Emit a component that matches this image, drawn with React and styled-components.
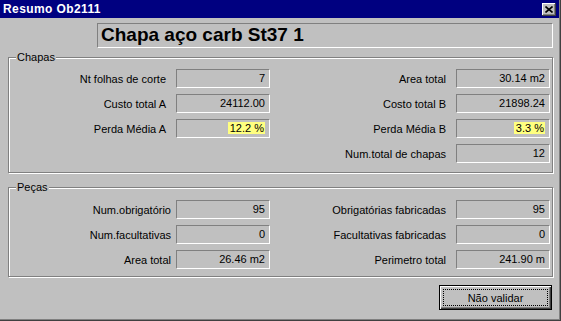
import React from "react";
import styled, { createGlobalStyle } from "styled-components";

const Global = createGlobalStyle`
  html, body { margin: 0; padding: 0; background: #c0c0c0; }
  body { font-family: "Liberation Sans", Arial, sans-serif; }
  * { box-sizing: border-box; }
`;

const Frame = styled.div`
  width: 561px;
  height: 321px;
  background: #c0c0c0;
  padding: 0 2px 2px 0;
  box-shadow: inset -1px -1px 0 #404040, inset -2px -2px 0 #808080;
  display: flex;
  flex-direction: column;
  overflow: hidden;
`;

const TitleBar = styled.div`
  height: 18px;
  background: #000080;
  display: flex;
  align-items: center;
  justify-content: space-between;
  padding: 0 2px 0 3px;
`;

const Title = styled.span`
  color: #ffffff;
  font-weight: bold;
  font-size: 12px;
  letter-spacing: 0.4px;
`;

const CloseButton = styled.div`
  width: 14px;
  height: 13px;
  background: #c0c0c0;
  box-shadow: inset -1px -1px 0 #404040, inset 1px 1px 0 #ffffff, inset -2px -2px 0 #808080;
  display: flex;
  align-items: center;
  justify-content: center;
  margin-right: 1px;
`;

const Content = styled.div`
  flex: 1;
  padding: 5px 6px 0 8px;
  display: flex;
  flex-direction: column;
`;

const Heading = styled.div`
  margin-left: 89px;
  height: 25px;
  border-top: 1px solid #808080;
  border-left: 1px solid #808080;
  border-bottom: 1px solid #ffffff;
  border-right: 1px solid #ffffff;
  font-weight: bold;
  font-size: 19px;
  line-height: 22px;
  padding-left: 3px;
  color: #000;
`;

const Group = styled.div`
  position: relative;
  margin-top: ${(p) => p.$top}px;
  border: 1px solid #808080;
  box-shadow: 1px 1px 0 #ffffff, inset 1px 1px 0 #ffffff;
  padding: ${(p) => p.$pad};
  display: grid;
  grid-template-columns: 166px 94px 186px 94px;
  grid-auto-rows: 19px;
  row-gap: 6px;
  align-items: center;
`;

const Legend = styled.span`
  position: absolute;
  left: 7px;
  top: -7px;
  background: #c0c0c0;
  font-size: 11px;
  line-height: 13px;
  padding: 0 1px;
  color: #000;
`;

const Label = styled.span`
  font-size: 11px;
  color: #000;
  text-align: right;
  padding-right: ${(p) => p.$gap ?? 10}px;
  white-space: nowrap;
`;

const Field = styled.div`
  height: 19px;
  border-top: 1px solid #808080;
  border-left: 1px solid #808080;
  border-bottom: 1px solid #ffffff;
  border-right: 1px solid #ffffff;
  font-size: 11px;
  line-height: 17px;
  text-align: right;
  padding-right: 4px;
  color: #000;
  white-space: nowrap;
`;

const Highlight = styled.span`
  background: #ffff80;
  padding: 0 1px 0 2px;
`;

const Empty = styled.span``;

const Footer = styled.div`
  display: flex;
  justify-content: flex-end;
  margin-top: 8px;
  padding-right: 1px;
`;

const Button = styled.button`
  width: 113px;
  height: 25px;
  background: #c0c0c0;
  border: 1px solid #000;
  box-shadow: inset 1px 1px 0 #ffffff, inset -1px -1px 0 #404040, inset -2px -2px 0 #808080;
  font-family: "Liberation Sans", Arial, sans-serif;
  font-size: 11px;
  color: #000;
  padding: 3px;
  display: flex;
`;

const Focus = styled.span`
  flex: 1;
  border: 1px dotted #000;
  display: flex;
  align-items: center;
  justify-content: center;
`;

const chapas = [
  ["Nt folhas de corte", "7", "Area total", "30.14 m2"],
  ["Custo total A", "24112.00", "Costo total B", "21898.24"],
  ["Perda Média A", "12.2 %", "Perda Média B", "3.3 %", true],
  [null, null, "Num.total de chapas", "12"],
];

const pecas = [
  ["Num.obrigatório", "95", "Obrigatórias fabricadas", "95"],
  ["Num.facultativas", "0", "Facultativas fabricadas", "0"],
  ["Area total", "26.46 m2", "Perimetro total", "241.90 m"],
];

function Rows({ rows, leftGap }) {
  return rows.map(([l1, v1, l2, v2, hl], i) => (
    <React.Fragment key={i}>
      {l1 ? <Label $gap={leftGap}>{l1}</Label> : <Empty />}
      {l1 ? <Field>{hl ? <Highlight>{v1}</Highlight> : v1}</Field> : <Empty />}
      <Label>{l2}</Label>
      <Field>{hl ? <Highlight>{v2}</Highlight> : v2}</Field>
    </React.Fragment>
  ));
}

export default function App() {
  return (
    <>
      <Global />
      <Frame>
        <TitleBar>
          <Title>Resumo Ob2111</Title>
          <CloseButton>
            <svg width="8" height="7" viewBox="0 0 8 7">
              <path d="M0.5 0.5 L7.5 6.5 M7.5 0.5 L0.5 6.5" stroke="#000" strokeWidth="1.6" />
            </svg>
          </CloseButton>
        </TitleBar>
        <Content>
          <Heading>Chapa aço carb St37 1</Heading>
          <Group $top={9} $pad="11px 0 9px 1px">
            <Legend>Chapas</Legend>
            <Rows rows={chapas} />
          </Group>
          <Group $top={14} $pad="12px 0 7px 1px">
            <Legend>Peças</Legend>
            <Rows rows={pecas} leftGap={5} />
          </Group>
          <Footer>
            <Button>
              <Focus>Não validar</Focus>
            </Button>
          </Footer>
        </Content>
      </Frame>
    </>
  );
}
